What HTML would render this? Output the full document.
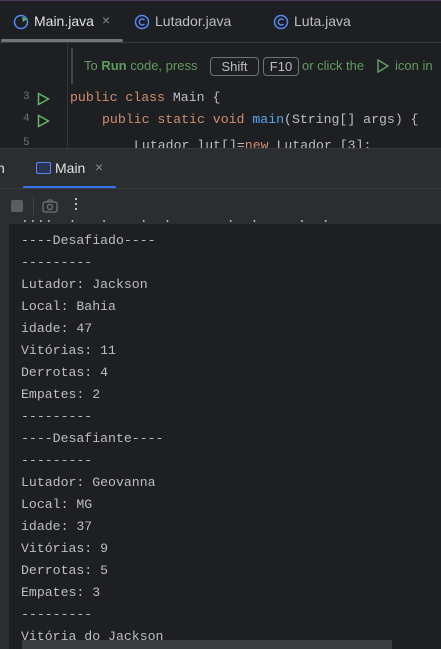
<!DOCTYPE html><html><head><style>
body{margin:0;width:441px;height:649px;overflow:hidden;background:#1e1f22;font-family:"Liberation Sans",sans-serif;position:relative}
.a{position:absolute;white-space:pre}
.m{font-family:"Liberation Mono",monospace;font-size:13.2px}
.c{color:#bcbec4}
.k{color:#cf8e6d}
</style></head><body>
<div class="a" style="left:0;top:0;width:441px;height:1px;background:#4a3a55"></div>
<div class="a" style="left:0;top:42px;width:441px;height:1px;background:#393b40"></div>
<div class="a" style="left:1px;top:39px;width:122px;height:3px;background:#6f737a;border-radius:2px"></div>
<svg class="a" style="left:13px;top:14px" width="16" height="16"><circle cx="8" cy="8" r="6.5" fill="none" stroke="#548af7" stroke-width="1.5"/><path d="M9 3l5 2-4 3z" fill="#5fb865"/></svg>
<div class="a" style="left:34px;top:13px;font-size:14px;color:#dfe1e5">Main.java</div>
<div class="a" style="left:102px;top:12px;font-size:14px;color:#868a91">×</div>
<svg class="a" style="left:134px;top:14px" width="16" height="16"><circle cx="8" cy="8" r="6.5" fill="none" stroke="#548af7" stroke-width="1.5"/><path d="M10.5 6a3 3 0 1 0 0 4" fill="none" stroke="#548af7" stroke-width="1.4"/></svg>
<div class="a" style="left:155px;top:13px;font-size:14px;color:#bcbec4">Lutador.java</div>
<svg class="a" style="left:273px;top:14px" width="16" height="16"><circle cx="8" cy="8" r="6.5" fill="none" stroke="#548af7" stroke-width="1.5"/><path d="M10.5 6a3 3 0 1 0 0 4" fill="none" stroke="#548af7" stroke-width="1.4"/></svg>
<div class="a" style="left:294px;top:13px;font-size:14px;color:#bcbec4">Luta.java</div>
<div class="a" style="left:67px;top:43px;width:1px;height:105px;background:#313438"></div>
<div class="a" style="left:71px;top:48px;width:2px;height:36px;background:#3c4a3c"></div>
<div class="a" style="left:84px;top:58px;font-size:13px;color:#5f9c5f">To <b>Run</b> code, press</div>
<div class="a" style="left:210px;top:57px;width:47px;height:17px;border:1px solid #6f737a;border-radius:4px;color:#bcbec4;font-size:13px;text-align:center;line-height:17px">Shift</div>
<div class="a" style="left:263px;top:57px;width:34px;height:17px;border:1px solid #6f737a;border-radius:4px;color:#bcbec4;font-size:13px;text-align:center;line-height:17px">F10</div>
<div class="a" style="left:302px;top:58px;font-size:13px;color:#5f9c5f">or click the</div>
<svg class="a" style="left:377px;top:59px" width="12" height="14"><path d="M1 1l10 6-10 6z" fill="none" stroke="#5f9c5f" stroke-width="1.5"/></svg>
<div class="a" style="left:395px;top:58px;font-size:13px;color:#5f9c5f">icon in</div>
<div class="a m" style="left:23px;top:91px;color:#6f737a;font-size:11px">3</div>
<div class="a m" style="left:23px;top:113px;color:#6f737a;font-size:11px">4</div>
<div class="a m" style="left:23px;top:137px;color:#6f737a;font-size:11px">5</div>
<svg class="a" style="left:37px;top:92px" width="14" height="14"><path d="M1.5 1.5l10 5.5-10 5.5z" fill="none" stroke="#5fb865" stroke-width="1.5"/></svg>
<svg class="a" style="left:37px;top:114px" width="14" height="14"><path d="M1.5 1.5l10 5.5-10 5.5z" fill="none" stroke="#5fb865" stroke-width="1.5"/></svg>
<div class="a m c" style="left:70px;top:90px"><span class="k">public class</span> Main {</div>
<div class="a m c" style="left:102px;top:112px"><span class="k">public static void</span> <span style="color:#56a8f5">main</span>(String[] args) {</div>
<div class="a m c" style="left:134px;top:138px">Lutador lut[]=<span class="k">new</span> Lutador [3];</div>
<div class="a" style="left:0;top:148px;width:441px;height:75px;background:#2b2d30;border-top:1px solid #393b40"></div>
<div class="a" style="left:-3px;top:160px;font-size:14px;color:#dfe1e5">n</div>
<div class="a" style="left:36px;top:162px;width:13px;height:10px;border:1.5px solid #548af7;border-radius:2px;background:#2a3450"></div>
<div class="a" style="left:55px;top:160px;font-size:14px;color:#dfe1e5">Main</div>
<div class="a" style="left:95px;top:159px;font-size:14px;color:#868a91">×</div>
<div class="a" style="left:23px;top:186px;width:93px;height:3px;background:#3574f0;border-radius:2px"></div>
<div class="a" style="left:0;top:188px;width:441px;height:1px;background:#393b40"></div>
<div class="a" style="left:11px;top:200px;width:12px;height:12px;background:#5a5d63;border-radius:2px"></div>
<div class="a" style="left:33px;top:197px;width:1px;height:18px;background:#43454a"></div>
<svg class="a" style="left:42px;top:199px" width="16" height="14"><rect x="1" y="3" width="14" height="10" rx="2" fill="none" stroke="#6f737a" stroke-width="1.3"/><circle cx="8" cy="8" r="2.5" fill="none" stroke="#6f737a" stroke-width="1.3"/><path d="M5 3l1.5-2h3L11 3" fill="none" stroke="#6f737a" stroke-width="1.3"/></svg>
<div class="a" style="left:75px;top:198px;width:2px;height:2px;background:#bcbec4;box-shadow:0 5px #bcbec4,0 10px #bcbec4"></div>
<div class="a" style="left:0;top:223px;width:9px;height:426px;background:#2b2d30"></div>
<div class="a m c" style="left:21px;top:208px;line-height:22px">....  .   .    .  .       .  .     .  .
----Desafiado----
---------
Lutador: Jackson
Local: Bahia
idade: 47
Vitórias: 11
Derrotas: 4
Empates: 2
---------
----Desafiante----
---------
Lutador: Geovanna
Local: MG
idade: 37
Vitórias: 9
Derrotas: 5
Empates: 3
---------
Vitória do Jackson</div>
<div class="a" style="left:22px;top:640px;width:370px;height:9px;background:#3c3d40"></div>
</body></html>
